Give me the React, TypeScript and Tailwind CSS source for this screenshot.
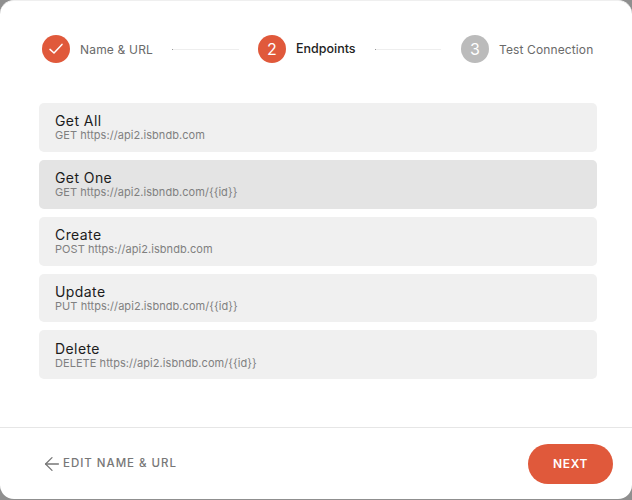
import { ArrowLeft } from "lucide-react";

type Endpoint = {
  name: string;
  url: string;
  active?: boolean;
};

const endpoints: Endpoint[] = [
  { name: "Get All", url: "GET https://api2.isbndb.com" },
  { name: "Get One", url: "GET https://api2.isbndb.com/{{id}}", active: true },
  { name: "Create", url: "POST https://api2.isbndb.com" },
  { name: "Update", url: "PUT https://api2.isbndb.com/{{id}}" },
  { name: "Delete", url: "DELETE https://api2.isbndb.com/{{id}}" },
];

function Connector({ width }: { width: string }) {
  return (
    <div className={`flex items-center ${width}`}>
      <div className="h-px w-px bg-[#9a9a9a]" />
      <div className="h-px flex-1 bg-[#eeeeee]" />
    </div>
  );
}

export default function App() {
  return (
    <div className="h-[500px] w-[632px] overflow-hidden bg-[#8f8f8f] font-['Inter',sans-serif]">
      <div className="flex h-[499px] flex-col rounded-[14px] border-t border-[#efefef] bg-white">
        <div className="flex h-[96px] items-center pl-[42px]">
          <div className="flex h-7 w-7 items-center justify-center rounded-full bg-[#e0593b]">
            <svg width="18" height="18" viewBox="0 0 18 18" fill="none" stroke="white" strokeWidth="1.5" strokeLinecap="round" strokeLinejoin="round">
              <path d="M3 9.4 L7 13 L15 4.4" />
            </svg>
          </div>
          <span className="ml-[10px] w-[92px] pt-px text-[12px] tracking-[0.015em] text-[#6a6a6a]">Name &amp; URL</span>
          <Connector width="w-[67px]" />
          <div className="ml-[19px] flex h-7 w-7 items-center justify-center rounded-full bg-[#e0593b] text-[16px] text-white">2</div>
          <span className="ml-[10px] w-[79px] pt-px text-[12.5px] font-medium text-[#222222]">Endpoints</span>
          <Connector width="w-[66px]" />
          <div className="ml-[20px] flex h-7 w-7 items-center justify-center rounded-full bg-[#bbbbbb] text-[16px] text-white">3</div>
          <span className="ml-[10px] pt-px text-[12px] tracking-[0.01em] text-[#6a6a6a]">Test Connection</span>
        </div>
        <div className="flex flex-col gap-2 pl-[39px] pr-[35px] pt-[6.2px]">
          {endpoints.map((endpoint) => (
            <div
              key={endpoint.name}
              className={`flex h-[48.8px] flex-col justify-center rounded-[5px] pl-4 pt-[0.6px] ${endpoint.active ? "bg-[#e4e4e4]" : "bg-[#f0f0f0]"}`}
            >
              <div className="text-[14px] leading-[16px] tracking-[0.03em] text-[#1c1c1c]">{endpoint.name}</div>
              <div className="text-[11px] leading-[13px] tracking-[0.005em] text-[#808080]">{endpoint.url}</div>
            </div>
          ))}
        </div>
        <div className="mt-auto flex h-[72px] items-center justify-between border-t border-[#e6e6e6] pl-[41px] pr-[19px]">
          <div className="flex items-center text-[#777777]">
            <ArrowLeft size={22} strokeWidth={1.4} />
            <span className="text-[11.5px] font-medium tracking-[0.085em]">EDIT NAME &amp; URL</span>
          </div>
          <button className="h-10 w-[85px] rounded-full bg-[#e0593b] text-[12px] font-semibold tracking-[0.05em] text-white">NEXT</button>
        </div>
      </div>
    </div>
  );
}
